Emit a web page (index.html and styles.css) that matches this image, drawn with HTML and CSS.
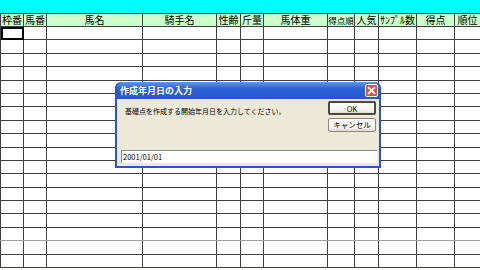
FILE: index.html
```html
<!DOCTYPE html>
<html lang="ja">
<head>
    <meta charset="UTF-8">
    <title>得点計算</title>
    <link rel="stylesheet" href="styles.css">
</head>
<body>
    <div class="sheet">
        <div class="topbar"></div>
        <table class="grid">
            <colgroup>
                <col class="w23"><col class="w23"><col class="w96"><col class="w74">
                <col class="w24"><col class="w23"><col class="w64"><col class="w27">
                <col class="w24"><col class="w38"><col class="w38"><col class="w26">
            </colgroup>
            <thead>
                <tr>
                    <th>枠番</th><th>馬番</th><th>馬名</th><th>騎手名</th>
                    <th>性齢</th><th>斤量</th><th>馬体重</th><th class="tight">得点順</th>
                    <th>人気</th><th>ｻﾝﾌﾟﾙ数</th><th>得点</th><th>順位</th>
                </tr>
            </thead>
            <tbody id="rows"></tbody>
        </table>
        <div class="bottom"></div>

        <!-- input dialog over the sheet -->
        <div class="dialog">
            <div class="title">
                <span>作成年月日の入力</span>
                <span class="close">
                    <svg width="9" height="9" viewBox="0 0 9 9"><path d="M1 1L8 8M8 1L1 8" stroke="#fff" stroke-width="1.8"/></svg>
                </span>
            </div>
            <div class="body">
                <div class="top">
                    <p class="msg">基礎点を作成する開始年月日を入力してください。</p>
                    <div class="buttons">
                        <button class="btn default">OK</button>
                        <button class="btn">キャンセル</button>
                    </div>
                </div>
                <div class="field">2001/01/01</div>
            </div>
        </div>
    </div>

    <script>
        // fill empty sheet rows
        var tbody = document.getElementById('rows');
        for (var r = 0; r < 18; r++) {
            var tr = document.createElement('tr');
            for (var c = 0; c < 12; c++) {
                var td = document.createElement('td');
                if (r === 0 && c === 0) td.className = 'active';
                tr.appendChild(td);
            }
            tbody.appendChild(tr);
        }
    </script>
</body>
</html>
```

FILE: styles.css
```css
body {
    margin: 0;
    background: #ffffff;
    font-family: "Noto Sans CJK JP", "DejaVu Sans", sans-serif;
    overflow: hidden;
}
.sheet {
    position: relative;
    width: 480px;
    height: 270px;
    overflow: hidden;
}
.topbar {
    height: 13px;
    background: #00ffff;
}
.grid {
    border-collapse: collapse;
    table-layout: fixed;
    width: 480px;
}
.w23 { width: 23px; }
.w96 { width: 96px; }
.w74 { width: 74px; }
.w24 { width: 24px; }
.w64 { width: 64px; }
.w27 { width: 27px; }
.w38 { width: 38px; }
.w26 { width: 26px; }
.grid th {
    height: 12px;
    padding: 0;
    background: #ccffcc;
    border: 1px solid #404040;
    font-size: 10px;
    font-weight: normal;
    line-height: 12px;
    color: #000000;
    white-space: nowrap;
    overflow: hidden;
}
.grid th.tight {
    font-size: 8.5px;
}
.grid td {
    height: 12.4px;
    padding: 0;
    border: 1px solid #404040;
}
.grid td.active {
    outline: 2px solid #000000;
    outline-offset: -2px;
}
.grid tr:nth-child(16) td {
    border-bottom-color: #a0a0a0;
}
.bottom {
    height: 4px;
    background: #fffff0;
}
.dialog {
    position: absolute;
    left: 115px;
    top: 82px;
    width: 266px;
    height: 86px;
    background: #2457c8;
    border-radius: 6px 6px 0 0;
    box-sizing: border-box;
    padding: 0 2px 2px 2px;
    display: flex;
    flex-direction: column;
}
.title {
    height: 17px;
    display: flex;
    align-items: center;
    justify-content: space-between;
    padding: 0 1px 0 3px;
    background: linear-gradient(#5a9af0, #2a62d8 40%, #2458cc);
    border-radius: 6px 6px 0 0;
    color: #ffffff;
    font-size: 9px;
    font-weight: bold;
}
.close {
    width: 13px;
    height: 13px;
    box-sizing: border-box;
    border: 1px solid #ffffff;
    border-radius: 2px;
    background: #e0502d;
    display: flex;
    align-items: center;
    justify-content: center;
}
.body {
    flex: 1;
    background: #ece9d8;
    padding: 2px 3px 2px 3px;
    display: flex;
    flex-direction: column;
    justify-content: space-between;
}
.top {
    display: flex;
    justify-content: space-between;
}
.msg {
    margin: 5px 0 0 5px;
    font-size: 7px;
    color: #000000;
}
.buttons {
    display: flex;
    flex-direction: column;
    gap: 3px;
}
.btn {
    width: 48px;
    height: 14px;
    padding: 0;
    font-family: inherit;
    font-size: 7.5px;
    line-height: 12px;
    color: #000000;
    background: linear-gradient(#ffffff, #f0f0ea 80%, #dcd8c8);
    border: 1px solid #8a8878;
    border-radius: 2px;
}
.btn.default {
    border: 2px solid #4a4a40;
}
.field {
    height: 12px;
    margin: 0 0 1px 1px;
    width: 254px;
    background: #ffffff;
    border-top: 1px solid #8a8878;
    border-left: 1px solid #8a8878;
    font-size: 7.5px;
    line-height: 12px;
    padding-left: 1px;
    color: #000000;
}
```
